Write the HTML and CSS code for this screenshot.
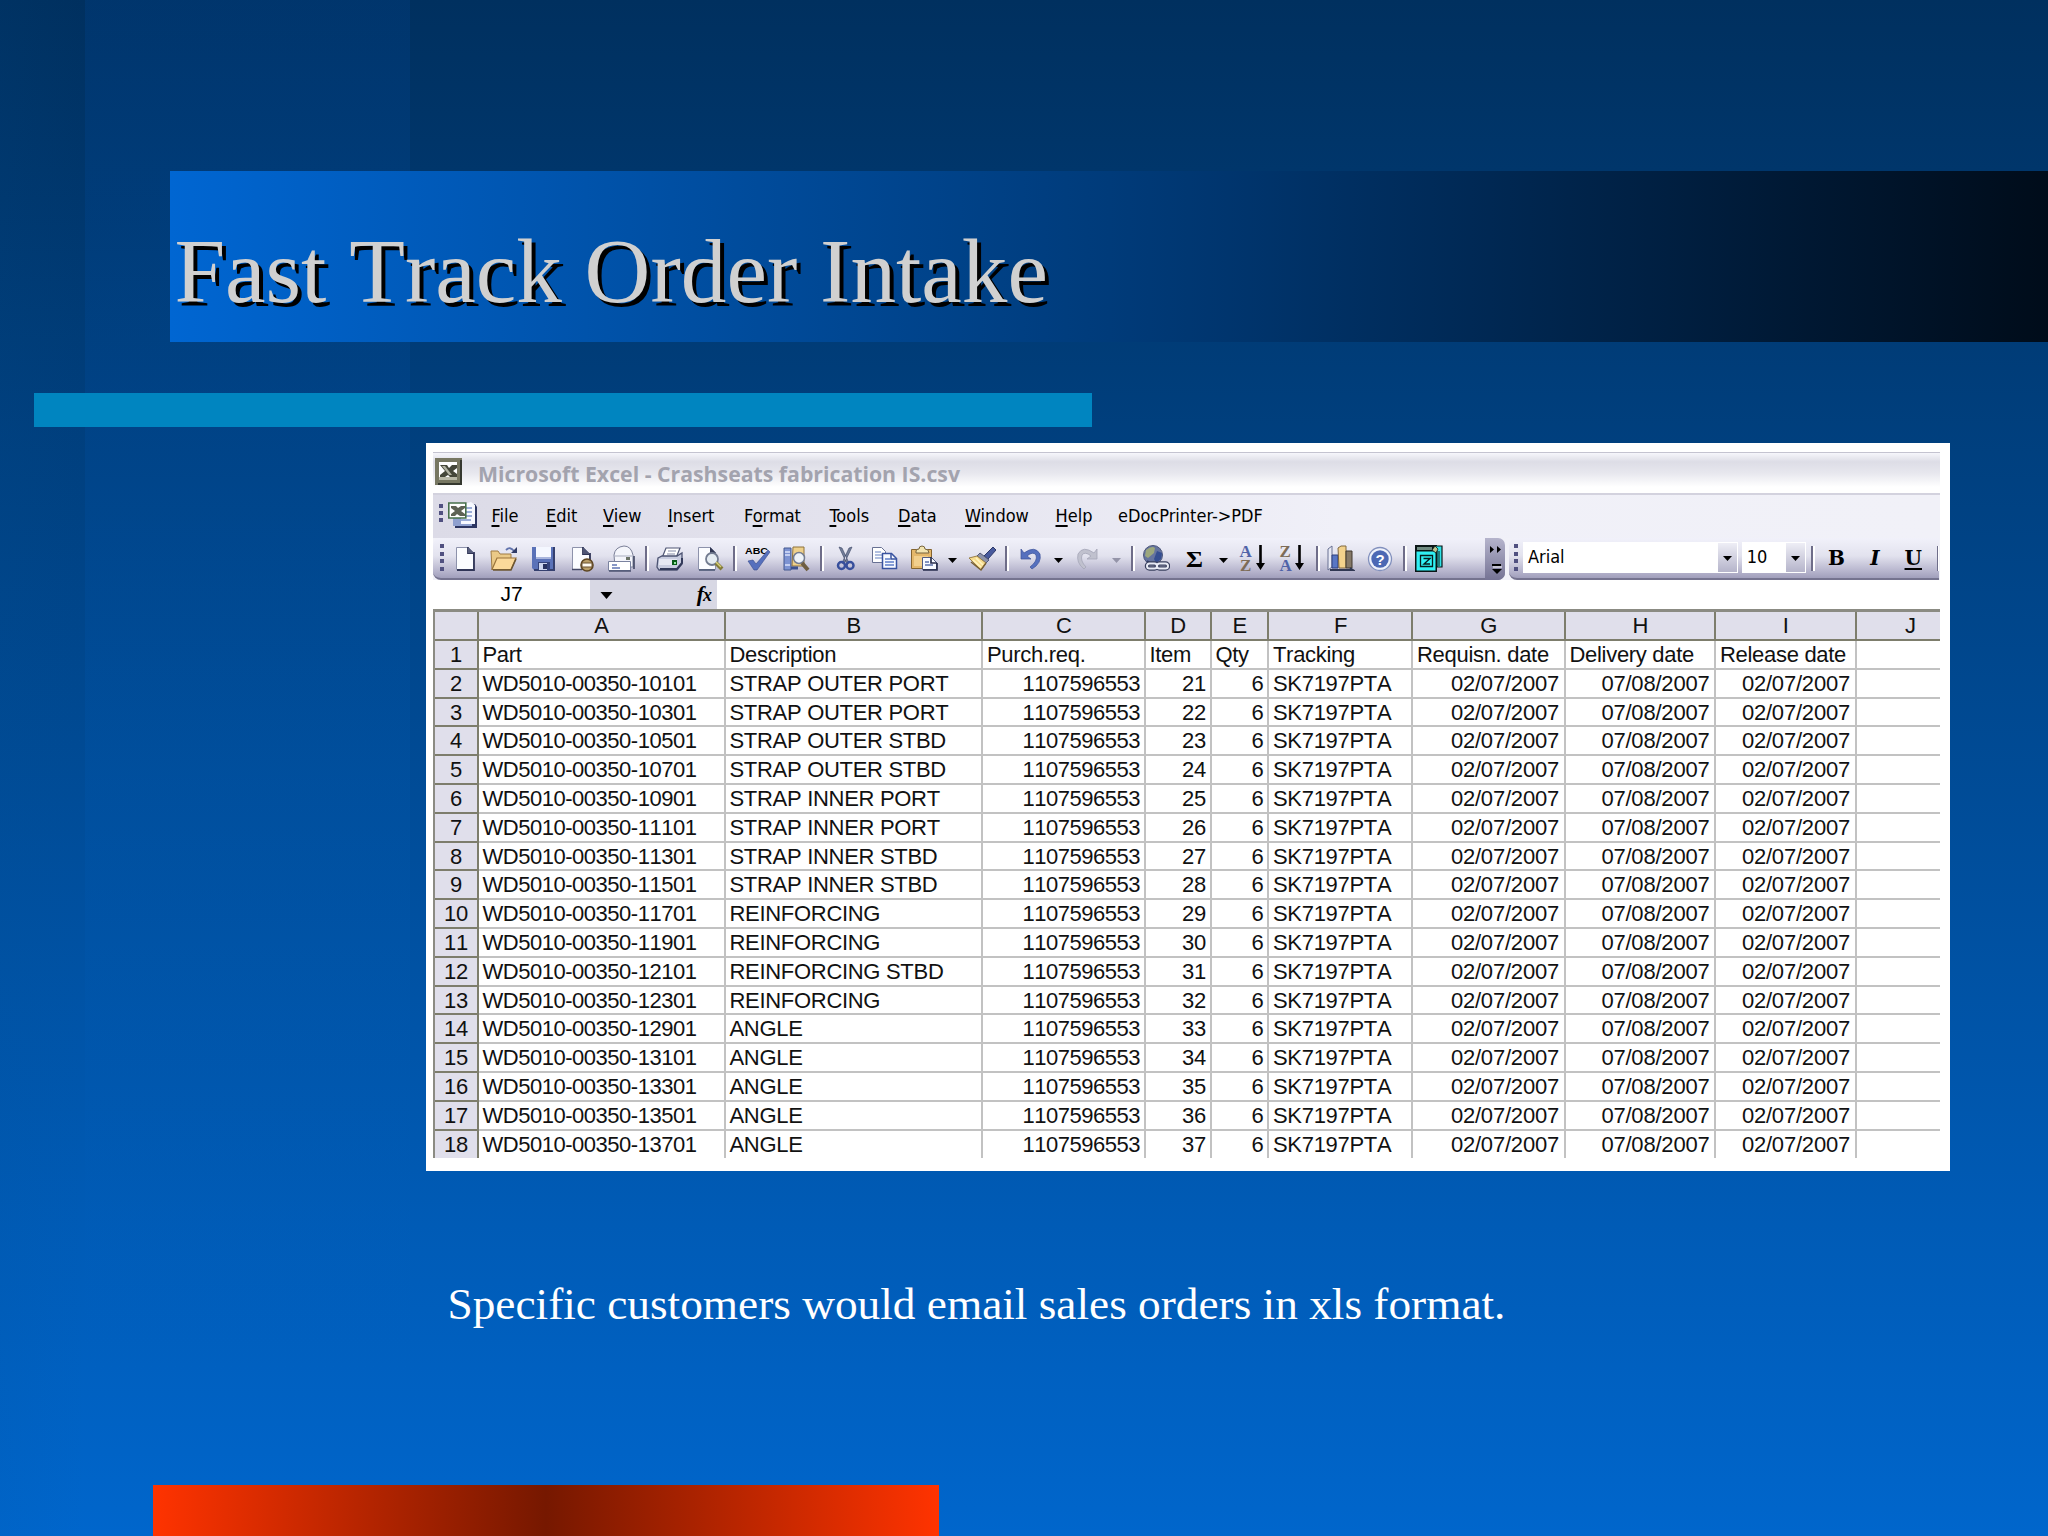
FILE: index.html
```html
<!DOCTYPE html>
<html lang="en">
<head>
<meta charset="utf-8">
<title>Fast Track Order Intake</title>
<link rel="stylesheet" href="styles.css">
</head>
<body>
<main class="slide">
  <header class="band"><h1>Fast Track Order Intake</h1></header>
  <div class="rule"></div>

  <section class="shot">
    <div class="titlebar">
      <svg class="xl" viewBox="0 0 27 27"><path fill="#777762" d="M0 0h27v27H0z"/><path fill="#35382f" d="M25 2h2v25H3v-2h22z"/><path fill="#fff" d="M4 4h18v18H4z"/><path fill="#b9b9a8" d="M4 19h18v3H4z"/><path d="M5 7h7l2 3 3-3h5v3l-4 3 4 3v3h-7l-2-2-3 2H5v-2l5-4z" fill="#45473a"/><path d="M7 8h3l7 9h-3z" fill="#b4b5a5"/></svg>
      <svg class="caption" viewBox="0 0 500 36"><text x="0" y="24" textLength="482" lengthAdjust="spacingAndGlyphs">Microsoft Excel - Crashseats fabrication IS.csv</text></svg>
    </div>
    <nav class="menubar">
      <span class="grip"><i></i><i></i><i></i></span>
      <svg class="book" viewBox="0 0 30 28"><path d="M7 3h20l2 3v21H7z" fill="#2c3561"/><path d="M5 8h19v17H5z" fill="#8fa0cf"/><path d="M16 3l7-2 4 3v19H13V6z" fill="#f7f9ff"/><path d="M18 7h6M18 11h6M18 15h6M13 19h10" stroke="#7d94cc" stroke-width="1.6"/><path d="M.8 2h17v15H.8z" fill="#fff" stroke="#47704b" stroke-width="1.6"/><path d="M3 5h5l2 2 3-2h4v2l-4 3 4 3v2h-5l-3-2-2 2H3v-2l4-3-4-3z" fill="#5d6254"/></svg>
      <span><u>F</u>ile</span><span><u>E</u>dit</span><span><u>V</u>iew</span><span><u>I</u>nsert</span><span>F<u>o</u>rmat</span><span><u>T</u>ools</span><span><u>D</u>ata</span><span><u>W</u>indow</span><span><u>H</u>elp</span><span>eDocPrinter-&gt;PDF</span>
    </nav>
    <div class="bars">
      <div class="tools">
        <span class="grip"><i></i><i></i><i></i><i></i></span>
        <svg viewBox="0 0 28 28"><path d="M5.500 2.500h12l5 5v17h-17z" fill="#fbfcff" stroke="#8d92ab"/><path d="M17 2v6h6v17H6" fill="none" stroke="#303557" stroke-width="1.800"/><path d="M17 2l6 6h-6z" fill="#565c7c"/></svg>
        <svg viewBox="0 0 28 28"><path d="M1 6h7l2 3h11v5L19 24H2z" fill="#eac987" stroke="#a07d45"/><path d="M7 13h19l-5 11.500H2z" fill="#fbd99a" stroke="#99733b" stroke-width="1.200"/><path d="M26 14l-5 11H3" fill="none" stroke="#6b5532" stroke-width="1.500"/><path d="M16 5q4-4 8 1" fill="none" stroke="#6274ad" stroke-width="1.800"/><path d="M27 2v6h-6z" fill="#303b66"/></svg>
        <svg viewBox="0 0 28 28"><path d="M2 2h23v23H4l-2-2z" fill="#5a72b8"/><path d="M24 2v23H4" fill="none" stroke="#35406f" stroke-width="2"/><path d="M6 2h15v12H6z" fill="#f4f7ff"/><path d="M6 13h15" stroke="#a8b5dd" stroke-width="2"/><path d="M8 17h12v8H8z" fill="#35447c"/><path d="M9 18h8v7H9z" fill="#cdd6ee"/><path d="M13 19h4v5h-4z" fill="#27325f"/></svg>
        <svg viewBox="0 0 28 28"><path d="M3.500 2.500h11l6 6v16h-17z" fill="#fbfcff" stroke="#8d92ab"/><path d="M14 2v7h7v6" fill="none" stroke="#303557" stroke-width="1.800"/><path d="M14 2l7 7h-7z" fill="#4f5575"/><path d="M3 24.500h10" stroke="#444967" stroke-width="1.500"/><circle cx="18" cy="20" r="6" fill="#b99d67" stroke="#5d4522" stroke-width="1.600"/><path d="M13 18h10v4H13z" fill="#fffaf0" stroke="#6b5330"/></svg>
        <svg viewBox="0 0 28 28"><path d="M7 10q1-8 10-9 7 0 9 9v12H8z" fill="#f4f5fb" stroke="#7b8098"/><path d="M8 11h17" stroke="#a9adbf"/><path d="M19 12h4v3h-4z" fill="#6c7468"/><path d="M27 11v13" stroke="#363c5a" stroke-width="1.500"/><path d="M1.500 16.500h22v9h-22z" fill="#fff" stroke="#7a829f"/><path d="M5 20h5M5 23h8" stroke="#6075b4" stroke-width="1.500"/><path d="M2 26h22" stroke="#4c5270" stroke-width="1.500"/></svg>
        <b class="sep"></b>
        <svg viewBox="0 0 28 28"><path d="M10 3h14l-4 10H6z" fill="#fff" stroke="#505775" stroke-width="1.200"/><path d="M12 6h8M11 9h8" stroke="#848ba7"/><path d="M2 13l4-2h15l5-3v11l-5 6H3l-2-3z" fill="#c9cde0" stroke="#4c5372" stroke-width="1.300"/><path d="M3 14h18v6H3z" fill="#e6e8f3"/><path d="M4 24h17l5-6v-5" fill="none" stroke="#333a5a" stroke-width="2"/><path d="M16 15h5v5h-5z" fill="#075c18"/><path d="M18 17h2v2h-2z" fill="#8fe59a"/></svg>
        <svg viewBox="0 0 28 28"><path d="M2.500 2.500h12l5 5v17h-17z" fill="#fbfcff" stroke="#8d92ab"/><path d="M14 2l6 6h-6z" fill="#303652"/><path d="M3 25h16" stroke="#44506e" stroke-width="1.500"/><circle cx="16" cy="14" r="6" fill="#e5ecf2" stroke="#727b90" stroke-width="1.800"/><path d="M20 18l6 6" stroke="#827b39" stroke-width="4"/><path d="M20 17l5 5" stroke="#d8d079" stroke-width="1.500"/></svg>
        <b class="sep"></b>
        <svg viewBox="0 0 28 28"><text x="1" y="8.500" class="abc" textLength="23" lengthAdjust="spacingAndGlyphs">ABC</text><path d="M4 16l5-1 3 4L24 5l2 2-13 18h-3z" fill="#5670bd" stroke="#35498b" stroke-width=".6"/></svg>
        <svg viewBox="0 0 28 28"><path d="M2 3h7v22H2z" fill="#7d93d2" stroke="#44588f"/><path d="M3 7h5M3 10h5M3 20h5" stroke="#dbe3fb" stroke-width="1.500"/><path d="M11 2h11v19H10z" fill="#eed08b" stroke="#8e733c"/><path d="M9 23h7" stroke="#3b5190" stroke-width="3"/><circle cx="17" cy="13" r="5.500" fill="#eef3f8" stroke="#737c91" stroke-width="1.500"/><path d="M20 18l6 7" stroke="#6f5e41" stroke-width="4"/></svg>
        <b class="sep"></b>
        <svg viewBox="0 0 28 28"><path d="M7 2l3 1 7 15-2 1zM20 2l-3 1-7 15 2 1z" fill="#737e99" stroke="#3a4464" stroke-width=".6"/><circle cx="9.500" cy="20.500" r="3.500" fill="none" stroke="#374f9c" stroke-width="2.500"/><circle cx="18" cy="20.500" r="3.500" fill="none" stroke="#374f9c" stroke-width="2.500"/></svg>
        <svg viewBox="0 0 28 28"><path d="M1.500 2.500h9l4 4v11h-13z" fill="#fff" stroke="#687193"/><path d="M4 7h6M4 10h8M4 13h8" stroke="#6782c2" stroke-width="1.200"/><path d="M11.500 8.500h9l5 5v10h-14z" fill="#f7faff" stroke="#3853a0" stroke-width="1.500"/><path d="M20 8v6h6" fill="none" stroke="#3853a0" stroke-width="1.500"/><path d="M14 14h5M14 17h9M14 20h9" stroke="#5f7fc9" stroke-width="1.300"/></svg>
        <svg viewBox="0 0 28 28"><path d="M1.500 4.500h20v19h-20z" fill="#e4b76a" stroke="#85642f"/><path d="M6 6q0-2 3-2 0-3 3-3t3 3q4 0 4 4H6z" fill="#f2e4b0" stroke="#78643c"/><path d="M4 11h14v10H4z" fill="#f2cf8c"/><path d="M12.500 12.500h9l5 5v7h-14z" fill="#f8faff" stroke="#505b82"/><path d="M21 12v6h6M13 25h14v-7" fill="none" stroke="#272d4c" stroke-width="1.700"/><path d="M15 17h4M15 20h8" stroke="#5b70ab" stroke-width="1.300"/></svg>
        <svg class="dd" viewBox="0 0 9 28"><path d="M0 13h9l-4.500 5z"/></svg>
        <svg viewBox="0 0 28 28"><path d="M25 2l3 3-8 9-4-3z" fill="#485a9d" stroke="#2d3868"/><path d="M12 8l9 7-3 3-9-7z" fill="#8d93aa" stroke="#53597a"/><path d="M1 13l8-2 9 7-5 7z" fill="#f7dc8d" stroke="#9b8149"/><path d="M5 15l8 7M8 13l7 7" stroke="#fff3c3" stroke-width="1.500"/><path d="M3 17l10 8 5-7" fill="none" stroke="#775f35" stroke-width="1.500"/></svg>
        <b class="sep"></b>
        <svg viewBox="0 0 28 28"><path d="M4 4v10h10l-4-3q6-5 9-1 2 6-6 12l2 2q10-6 8-15-5-9-16-1z" fill="#5570be" stroke="#3c529a" stroke-width=".7"/></svg>
        <svg class="dd" viewBox="0 0 9 28"><path d="M0 13h9l-4.500 5z"/></svg>
        <svg viewBox="0 0 28 28"><path d="M24 4v10H14l4-3q-6-5-9-1-2 6 4 12l-2 2q-8-6-6-15 5-9 16-1z" fill="#c0c1ce" stroke="#a5a6b7" stroke-width=".8"/></svg>
        <svg class="dd off" viewBox="0 0 9 28"><path d="M0 13h9l-4.500 5z"/></svg>
        <b class="sep"></b>
        <svg viewBox="0 0 28 28"><circle cx="11" cy="10" r="9.500" fill="#65749f" stroke="#4c5679"/><path d="M4 5q6-5 9-2l-1 5-6 5-3-2z" fill="#9ca77d"/><path d="M15 6l5 2-1 6-5 4-2-4z" fill="#354e91"/><path d="M5 16q4 4 9 3" stroke="#303b66" stroke-width="2" fill="none"/><g fill="none" stroke="#39405e" stroke-width="4.500"><rect x="5" y="18.500" width="10" height="5" rx="2.500"/><rect x="15" y="18.500" width="11" height="5" rx="2.500"/></g><g fill="none" stroke="#e8ebf5" stroke-width="2"><rect x="5" y="18.500" width="10" height="5" rx="2.500"/><rect x="15" y="18.500" width="11" height="5" rx="2.500"/></g></svg>
        <svg viewBox="0 0 28 28"><text x="5" y="21.500" class="sigma" textLength="17" lengthAdjust="spacingAndGlyphs">Σ</text></svg>
        <svg class="dd" viewBox="0 0 9 28"><path d="M0 13h9l-4.500 5z"/></svg>
        <svg viewBox="0 0 28 28"><text x="1.500" y="12" class="az blue">A</text><text x="2" y="25.500" class="az brown">Z</text><path d="M21.200 0h2.600v18h3.200l-4.500 7-4.500-7h3.200z"/></svg>
        <svg viewBox="0 0 28 28"><text x="1.500" y="12" class="az brown">Z</text><text x="1.500" y="25.500" class="az blue">A</text><path d="M20.200 0h2.600v18H26l-4.500 7-4.500-7h3.200z"/></svg>
        <b class="sep"></b>
        <svg viewBox="0 0 28 28"><path d="M1 4l4-3v21l-4 3z" fill="#e9ebf6" stroke="#687092"/><path d="M5 10h6v13H5z" fill="#5876c4" stroke="#2e417e"/><path d="M11 3l3-2h5v22h-7z" fill="#f3d28c" stroke="#80683e"/><path d="M19 6h6v17h-6z" fill="#857968" stroke="#40392f"/><path d="M3 25h23l-3-2" fill="none" stroke="#303752" stroke-width="1.800"/></svg>
        <svg viewBox="0 0 28 28"><circle cx="14" cy="14" r="11.500" fill="#eff2fb" stroke="#8290bd" stroke-width="1.300"/><circle cx="14" cy="14" r="8.700" fill="#4c68b4"/><text x="14" y="19.500" class="q">?</text></svg>
        <b class="sep"></b>
        <svg viewBox="0 0 28 28"><path d="M0 0h22v27H0z" fill="#0b1616"/><path d="M19 1h8v21h-5V6z" fill="#30e4e8" stroke="#0b1616" stroke-width="1.200"/><path d="M24 6v15" stroke="#0b1616"/><path d="M1.500 6.500h19v19h-19z" fill="#30f0f4"/><path d="M2 2h15v3H2z" fill="#6f8a80"/><path d="M17 5l3-4 3 3-2 4z" fill="#b9c48f" stroke="#0b1616" stroke-width=".8"/><path d="M5.500 10.500h12v11h-12z" fill="none" stroke="#061c1e" stroke-width="1.300"/><path d="M8.500 13.500h6.500l-6 5.500h6" fill="none" stroke="#061c1e" stroke-width="1.400"/></svg>
        <svg class="more" viewBox="0 0 20 42"><path d="M5 8l4 3.500L5 15zM12 8l4 3.500-4 3.500z"/><path d="M7 27h9" stroke="#000" stroke-width="2"/><path d="M8 29h9" stroke="#fff"/><path d="M7 31h10l-5 5z"/></svg>
      </div>
      <div class="format">
        <span class="grip"><i></i><i></i><i></i><i></i></span>
        <div class="combo face"><span>Arial</span><b><svg class="dd" viewBox="0 0 9 28"><path d="M0 12h9l-4.500 5z"/></svg></b></div>
        <div class="combo size"><span>10</span><b><svg class="dd" viewBox="0 0 9 28"><path d="M0 12h9l-4.500 5z"/></svg></b></div>
        <b class="sep"></b>
        <span class="style">B</span><span class="style it">I</span><span class="style"><u>U</u></span>
        <b class="sep last"></b>
      </div>
    </div>
    <div class="formula">
      <span class="name">J7</span>
      <span class="fx"><svg class="arrow" viewBox="0 0 12 8"><path d="M0 0h12L6 7z"/></svg><em>f<small>x</small></em></span>
      <span class="value"></span>
    </div>
    <div class="sheet" id="sheet"></div>
  </section>

  <p class="note">Specific customers would email sales orders in xls format.</p>
  <div class="foot"></div>
</main>
<script src="sheet.js"></script>
</body>
</html>
```
FILE: sheet.js
```js
const parts = [
  ['10101', 'STRAP OUTER PORT'], ['10301', 'STRAP OUTER PORT'],
  ['10501', 'STRAP OUTER STBD'], ['10701', 'STRAP OUTER STBD'],
  ['10901', 'STRAP INNER PORT'], ['11101', 'STRAP INNER PORT'],
  ['11301', 'STRAP INNER STBD'], ['11501', 'STRAP INNER STBD'],
  ['11701', 'REINFORCING'], ['11901', 'REINFORCING'],
  ['12101', 'REINFORCING STBD'], ['12301', 'REINFORCING'],
  ['12901', 'ANGLE'], ['13101', 'ANGLE'], ['13301', 'ANGLE'],
  ['13501', 'ANGLE'], ['13701', 'ANGLE']
];
const rows = [
  ['Part', 'Description', 'Purch.req.', 'Item', 'Qty', 'Tracking',
    'Requisn. date', 'Delivery date', 'Release date', '']
].concat(parts.map(([no, text], i) => [
  'WD5010-00350-' + no, text, '1107596553', String(21 + i), '6', 'SK7197PTA',
  '02/07/2007', '07/08/2007', '02/07/2007', ''
]));
const sheet = document.getElementById('sheet');

function cell(text, cls) {
  const el = document.createElement('div');
  el.className = cls;
  el.textContent = text;
  sheet.appendChild(el);
}

['', ...'ABCDEFGHIJ'].forEach(l => cell(l, 'head col-' + l));
rows.forEach((row, r) => {
  const last = r === rows.length - 1 ? ' last' : '';
  cell(r + 1, 'head num' + last);
  row.forEach((text, c) => {
    const right = r > 0 && [2, 3, 4, 6, 7, 8].includes(c);
    const date = r > 0 && c > 5 ? ' date' : '';
    cell(text, 'cell' + last + date + (right ? ' right' : '') + (r && (c === 0 || c === 2) ? ' tight' : ''));
  });
});
```
FILE: styles.css
```css
* { box-sizing: border-box; }
body { margin: 0; }

.slide {
  width: 2048px;
  height: 1536px;
  overflow: hidden;
  display: flex;
  flex-direction: column;
  align-items: flex-start;
  background:
    linear-gradient(rgba(0, 80, 176, .17), rgba(0, 102, 204, .13) 50%, rgba(0, 102, 204, 0) 90%) 85px 0 / 325px 100% no-repeat,
    linear-gradient(90deg, rgba(0, 80, 150, .08), rgba(0, 80, 150, 0)) 0 0 / 85px 100% no-repeat,
    linear-gradient(#00305f, #0066cc);
}

.band {
  width: 1878px;
  height: 171px;
  margin: 170.5px 0 0 170.4px;
  background: linear-gradient(90deg, #0066d2, #003b7a 50%, #000c1a);
}
.band h1 {
  margin: 0;
  padding: 48px 0 0 4px;
  font: 400 91.2px/105px "Liberation Serif", serif;
  font-kerning: none;
  color: #d0d0d0;
  text-shadow: 4px 4px 0 #000;
  white-space: nowrap;
}
.rule { width: 1058px; height: 34px; margin: 51px 0 0 34px; background: #0085c0; }

.shot {
  width: 1523.600px;
  height: 728px;
  margin: 16.500px 0 0 426.400px;
  padding: 9px 10px 0 6.600px;
  background: #fff;
  font-family: "DejaVu Sans Condensed", "DejaVu Sans", sans-serif;
}

.titlebar {
  height: 43px;
  display: flex;
  gap: 16px;
  padding: 5px 0 0 2.500px;
  border-top: 1px solid #c4c3d0;
  border-bottom: 2px solid #d3d2de;
  background: linear-gradient(#f6f6fb, #dddde6 22%, #e7e7ee 50%, #fff 85%);
}
.titlebar .xl { width: 27px; height: 27px; }
.titlebar .caption { width: 500px; height: 36px; overflow: visible; }
.caption text { font: 700 22px "Open Sans", "Noto Sans", sans-serif; fill: #a3a3ae; }

.grip { display: flex; flex-direction: column; gap: 3px; }
.grip i { width: 4px; height: 4px; background: #505080; }

.menubar {
  height: 43px;
  display: grid;
  grid-template-columns: 9px 43.5px 54.5px 57px 65px 76px 85.5px 68.5px 67px 90.5px 62.5px 160px;
  padding-left: 6px;
  font-size: 18px;
  line-height: 42px;
  white-space: nowrap;
  background: linear-gradient(90deg, #dcdbe7, #e4e3ee 30%, #f0f0f8 60%, #f1f1f8);
}
.menubar .grip { padding-top: 9px; }
.menubar .book { width: 30px; height: 28px; margin-top: 6px; }
.menubar u { text-decoration-thickness: 2px; text-underline-offset: 3px; }

.bars { height: 42px; display: flex; background: #f1f1f8; }
.tools, .format { background: linear-gradient(#f1f1fa, #e2e2ee 45%, #b4b2cb 85%, #a19fbc); border-bottom: 2px solid #75738f; }
.tools {
  width: 1072px;
  display: grid;
  grid-template-columns: 11px 39px 40px 39px 38px 38px 11px 40px 37px 11px 38px 38px 12px 39px 39px 38px 20px 37px 12px 37px 19px 39px 19px 11px 39px 38px 19px 40px 38px 11px 39px 37px 12px 70px 20px;
  padding-left: 7px;
  border-radius: 8px;
}
.bars svg { width: 28px; height: 28px; margin-top: 7px; }
.bars svg.dd { width: 9px; }
.bars .dd.off { fill: #9494a8; }
.bars svg.more { width: 20px; height: 42px; margin: 0; background: linear-gradient(#b5b4cc, #757394); border-radius: 0 7px 7px 0; }
.tools .grip, .format .grip { padding-top: 6px; gap: 3.500px; }
.sep { width: 4px; height: 25px; margin-top: 8px; background: linear-gradient(90deg, #6e6d89 50%, #fff 50%); }
.abc { font: 700 9px "Liberation Sans", sans-serif; }
.sigma { font: 700 23px "Liberation Serif", serif; }
.az { font: 700 17px "Liberation Serif", serif; }
.blue { fill: #5063a8; }
.brown { fill: #7d6c58; }
.q { font: 700 15px "Liberation Sans", sans-serif; fill: #fff; text-anchor: middle; }

.format { width: 430px; margin-left: 4px; display: flex; padding-left: 5px; border-radius: 8px 0 0 8px; overflow: hidden; }
.format .grip { width: 9px; }
.combo { height: 31px; margin-top: 4px; padding: 1px; display: flex; justify-content: space-between; background: #fff; font-size: 18px; line-height: 27px; }
.combo.face { width: 215px; padding-left: 5px; }
.combo.size { width: 64px; margin-left: 4px; padding-left: 5px; }
.combo b { width: 19px; display: flex; justify-content: center; background: linear-gradient(#eeeef6, #b5b4ca); }
.combo svg { margin-top: 1px; }
.format .sep { margin-left: 5px; }
.format .sep.last { margin-left: 7px; width: 2px; }
.style { width: 38.5px; padding-left: 5px; text-align: center; font: 700 20px/40px "DejaVu Serif", serif; }
.style.it { font-style: italic; }
.style u { text-decoration-thickness: 2px; text-underline-offset: 3px; }

.formula { height: 29px; display: grid; grid-template-columns: 157px 127px 1fr; line-height: 28px; }
.name { text-align: center; font: 21px/28px "Liberation Sans", sans-serif; }
.fx { display: flex; justify-content: space-between; align-items: center; padding: 0 6px 0 10px; background: #d8d8e4; }
.fx .arrow { width: 13px; height: 8px; margin-top: 2px; }
.fx em { font: italic 700 22px/28px "Liberation Serif", serif; letter-spacing: -1px; }
.fx small { font-size: 18px; }

.sheet {
  height: 549px;
  overflow: hidden;
  display: grid;
  grid-template-columns: 44px 247px 257.5px 162.5px 66px 57.5px 144px 152.5px 150.5px 140.5px 84.5px;
  grid-template-rows: 29px repeat(18, 28.8px);
  border-top: 3px solid #8b8b83;
  border-left: 2px solid #8b8b83;
  font: 22px/28px "Liberation Sans", sans-serif;
  font-kerning: none;
  letter-spacing: -.3px;
  color: #111;
}
.head { text-align: center; background: #e0dfeb; border-right: 2px solid #7d7d6c; border-bottom: 2px solid #7d7d6c; }
.col-J { border-right: 0; text-align: left; padding-left: 48px; }
.cell { padding: 0 4px 0 3.500px; border-right: 2px solid #c2c2c2; border-bottom: 2px solid #c2c2c2; white-space: nowrap; }
.cell:nth-child(11n) { border-right: 0; }
.last { border-bottom: 0; }
.right { text-align: right; }
.tight { letter-spacing: -.48px; }
.date { letter-spacing: -.2px; padding-right: 5px; }

.note { margin: 107px 0 0 447.5px; font: 45.3px/52px "Liberation Serif", serif; color: #fff; white-space: nowrap; }
.foot { width: 786px; height: 51px; margin: auto 0 0 153px; background: linear-gradient(90deg, #ff3300, #761800 50%, #ff3300); }
```
